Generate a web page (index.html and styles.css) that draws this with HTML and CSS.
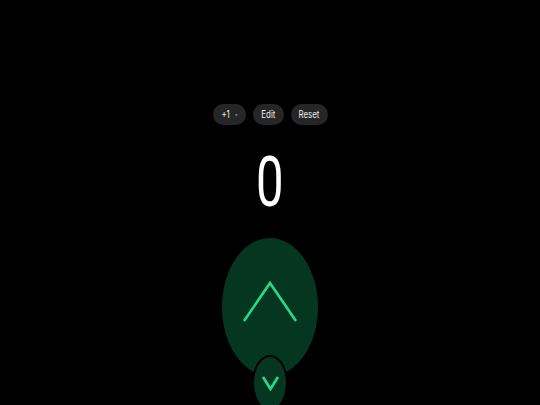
FILE: index.html
```html
<!DOCTYPE html>
<html>
<head>
<meta charset="utf-8">
<link rel="stylesheet" href="styles.css">
</head>
<body>
<main class="app">
  <div class="toolbar">
    <button class="pill step"><span class="lbl">+1</span><span class="caret">▾</span></button>
    <button class="pill"><span class="lbl">Edit</span></button>
    <button class="pill"><span class="lbl">Reset</span></button>
  </div>
  <div class="count"><span class="num">0</span></div>
  <div class="pad">
    <button class="inc" aria-label="Increment">
      <svg width="56" height="42" viewBox="0 0 56 42"><polyline points="2,40 28,2 54,40" fill="none" stroke="#22dc8c" stroke-width="2.6" stroke-linejoin="miter"/></svg>
    </button>
    <button class="dec" aria-label="Decrement">
      <svg width="19" height="16" viewBox="0 0 19 16"><polyline points="2,2 9.5,14 17,2" fill="none" stroke="#22dc8c" stroke-width="2.6"/></svg>
    </button>
  </div>
</main>
</body>
</html>
```
FILE: styles.css
```css
html, body {
  margin: 0;
  padding: 0;
  background: #000;
  height: 100%;
  overflow: hidden;
}
body {
  font-family: Inter, "Noto Sans", sans-serif;
  color: #fff;
}
.app {
  display: flex;
  flex-direction: column;
  align-items: center;
  padding-top: 104px;
}
.toolbar {
  display: flex;
  gap: 7px;
}
.pill {
  height: 21px;
  border: none;
  border-radius: 11px;
  background: #262626;
  color: #ececec;
  font-family: Inter, sans-serif;
  font-size: 10.5px;
  padding: 0;
  display: flex;
  align-items: center;
  justify-content: center;
  width: 31px;
}
.pill:nth-child(3) { width: 37px; }
.pill.step { width: 33px; gap: 3px; }
.lbl {
  display: inline-block;
  transform: scaleX(0.75);
}
.caret {
  font-size: 6px;
  color: #777;
  display: inline-block;
  transform: scaleX(0.8);
}
.count {
  margin-top: 17px;
  height: 80px;
  line-height: 80px;
}
.num {
  display: inline-block;
  font-family: Roboto, sans-serif;
  font-weight: 400;
  font-size: 70px;
  transform: scaleX(0.7);
}
.pad {
  margin-top: 16px;
  display: flex;
  flex-direction: column;
  align-items: center;
}
.inc {
  width: 96px;
  height: 138px;
  border-radius: 50%;
  border: none;
  background: #05361f;
  display: flex;
  align-items: center;
  justify-content: center;
  padding: 0 0 10px 0;
  margin: 0;
}
.dec {
  width: 36px;
  height: 56px;
  margin-top: -21px;
  border-radius: 50%;
  border: 2px solid #000;
  background: #05361f;
  display: flex;
  align-items: flex-start;
  justify-content: center;
  padding: 18px 0 0 0;
  box-sizing: border-box;
}
```
